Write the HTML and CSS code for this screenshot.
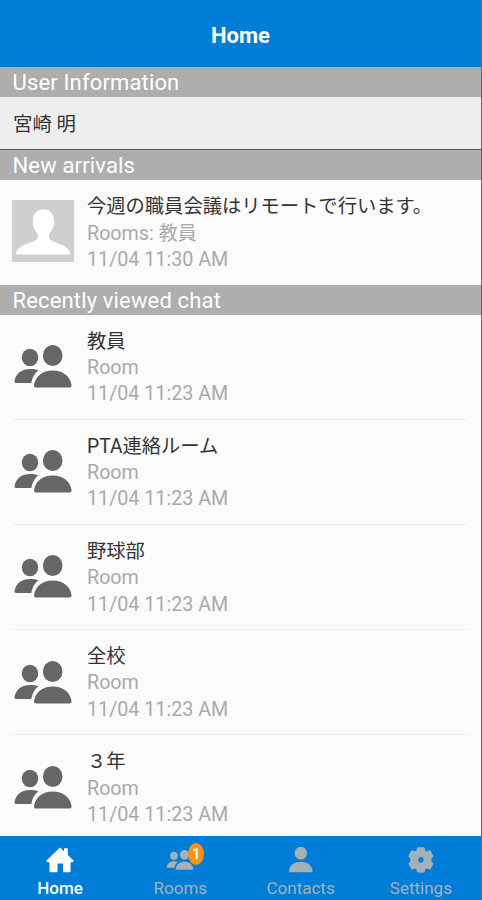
FILE: index.html
```
<!DOCTYPE html>
<html lang="ja">
<head>
    <meta charset="UTF-8">
    <meta name="viewport" content="width=device-width, initial-scale=1.0">
    <title>Home</title>
    <link rel="stylesheet" href="styles.css">
</head>
<body>
    <svg class="sprite" width="0" height="0">
        <symbol id="people" viewBox="0 0 58 43">
            <ellipse cx="16" cy="12.5" rx="8.2" ry="8.8"/>
            <ellipse cx="38.7" cy="10.5" rx="9.8" ry="10.5"/>
            <path d="M2 38C0.8 38 0.3 37.3 0.5 36C2 28 8 24 16 24C19 24 22 24.4 24.5 25.2C20.5 28.5 18.5 32 17.3 38Z"/>
            <path d="M22 42.5C20.5 42.5 19.8 41.5 20 40C21.5 31 28.5 25.5 38.7 25.5C49 25.5 56 31 57.5 40C57.7 41.5 57 42.5 55.5 42.5Z"/>
        </symbol>
    </svg>

    <div class="screen">
        <header class="header">Home</header>

        <h2 class="section-title">User Information</h2>
        <div class="user">宮崎 明</div>

        <h2 class="section-title arrivals-title">New arrivals</h2>
        <div class="item arrival">
            <svg class="avatar" viewBox="0 0 61 61">
                <rect width="61" height="61" fill="#cfcfcf"/>
                <path fill="#fff" d="M31 9C37.5 9 41.5 14 41.3 21C41.1 27 39 30.5 36.5 33.5C36 37.5 37 39 40 40.5C47 43.5 56 45 57.5 53.5H3.5C5 45 14 43.5 21.5 40.5C25 39 26 37.5 25.5 33.5C22.5 30.5 20.6 27 20.5 21C20.4 14 24.5 9 31 9Z"/>
            </svg>
            <div class="text">
                <p class="name">今週の職員会議はリモートで行います。</p>
                <p>Rooms: <span class="room-name">教員</span></p>
                <p>11/04 11:30 AM</p>
            </div>
        </div>

        <h2 class="section-title">Recently viewed chat</h2>
        <div class="list">
            <div class="item">
                <svg class="room-icon"><use href="#people"/></svg>
                <div class="text">
                    <p class="name">教員</p>
                    <p>Room</p>
                    <p>11/04 11:23 AM</p>
                </div>
            </div>
            <div class="item">
                <svg class="room-icon"><use href="#people"/></svg>
                <div class="text">
                    <p class="name">PTA連絡ルーム</p>
                    <p>Room</p>
                    <p>11/04 11:23 AM</p>
                </div>
            </div>
            <div class="item">
                <svg class="room-icon"><use href="#people"/></svg>
                <div class="text">
                    <p class="name">野球部</p>
                    <p>Room</p>
                    <p>11/04 11:23 AM</p>
                </div>
            </div>
            <div class="item">
                <svg class="room-icon"><use href="#people"/></svg>
                <div class="text">
                    <p class="name">全校</p>
                    <p>Room</p>
                    <p>11/04 11:23 AM</p>
                </div>
            </div>
            <div class="item">
                <svg class="room-icon"><use href="#people"/></svg>
                <div class="text">
                    <p class="name">３年</p>
                    <p>Room</p>
                    <p>11/04 11:23 AM</p>
                </div>
            </div>
        </div>

        <nav class="tabs">
            <a class="tab active">
                <svg class="tab-icon" viewBox="0 0 28 26">
                    <path d="M14 0.5L18 4.3V1.2H21.8V8L27.8 13.8L26.5 15.3H24.5V25.2H17V16.5H11.5V25.2H3.5V15.3H1.5L0.2 13.8Z"/>
                </svg>
                <span>Home</span>
            </a>
            <a class="tab">
                <span class="icon-wrap">
                    <svg class="tab-icon rooms-icon"><use href="#people"/></svg>
                    <span class="badge">1</span>
                </span>
                <span>Rooms</span>
            </a>
            <a class="tab">
                <svg class="tab-icon" viewBox="0 0 28 26">
                    <ellipse cx="13.8" cy="6.2" rx="6.3" ry="6.4"/>
                    <path d="M2.2 25.3V22.5C3.5 17.5 8 14.8 13.8 14.8S24 17.5 25.4 22.5V25.3Z"/>
                </svg>
                <span>Contacts</span>
            </a>
            <a class="tab">
                <svg class="tab-icon" viewBox="0 0 28 26">
                    <path fill-rule="evenodd" stroke="#a5b1b9" stroke-linejoin="round" d="M10.6 0.7H17.2L18 3.9L19.8 4.9L23.1 3.7L26 9.2L23.9 11.8V14L26 16.6L23.1 22.1L19.8 20.9L18 21.9L17.2 25.1H10.6L9.8 21.9L8 20.9L4.7 22.1L1.8 16.6L3.9 14V11.8L1.8 9.2L4.7 3.7L8 4.9L9.8 3.9ZM13.9 9.6A3.3 3.3 0 1 0 13.9 16.2A3.3 3.3 0 1 0 13.9 9.6Z"/>
                </svg>
                <span>Settings</span>
            </a>
        </nav>
    </div>
</body>
</html>
```

FILE: styles.css
```
* {
    box-sizing: border-box;
}
body {
    margin: 0;
    font-family: Roboto, "Noto Sans CJK JP", sans-serif;
    background-color: #fbfbfb;
}
.sprite {
    position: absolute;
}
.screen {
    display: flex;
    flex-direction: column;
    height: 900px;
    overflow: hidden;
    border-right: 1px solid #666;
}
.header {
    flex: none;
    height: 67px;
    padding-top: 4px;
    line-height: 64px;
    text-align: center;
    color: #fff;
    background-color: #007dd7;
    font-size: 22px;
    font-weight: bold;
}
.section-title {
    flex: none;
    height: 30px;
    margin: 0;
    padding: 1px 12.5px 0;
    line-height: 30px;
    color: #fff;
    background-color: #aeaeae;
    font-size: 22px;
    font-weight: normal;
    letter-spacing: 0.15px;
}
.user {
    flex: none;
    height: 52px;
    padding: 1px 0 0 13px;
    line-height: 53px;
    background-color: #eee;
    color: #333;
    font-size: 19.4px;
}
.arrivals-title {
    height: 31px;
    border-top: 1px solid #555;
}
.item {
    display: flex;
    flex: none;
    align-items: center;
    height: 105.25px;
    margin: 0 13px 0 12px;
    border-bottom: 1px solid #f0f0f0;
}
.list .item:first-child {
    height: 104.5px;
}
.arrival {
    height: 105px;
    border-bottom: none;
}
.avatar {
    width: 62px;
    height: 62px;
    margin: 0 13px 4px 0;
}
.room-icon {
    width: 58px;
    height: 43px;
    margin: 0 15px 0 2px;
    fill: #666;
}
.text {
    padding-top: 3px;
}
.text p {
    margin: 0;
    height: 26.4px;
    line-height: 26.4px;
    color: #aaa;
    font-size: 19.7px;
    white-space: nowrap;
}
.text .name {
    color: #333;
    font-size: 19.3px;
}
.room-name {
    font-size: 19px;
}
.list {
    flex: 1;
    min-height: 0;
    overflow: hidden;
}
.tabs {
    display: flex;
    flex: none;
    height: 64px;
    background-color: #007dd7;
}
.tab {
    display: flex;
    flex: 1;
    flex-direction: column;
    align-items: center;
    padding-top: 11px;
    color: #a5b1b9;
    fill: #a5b1b9;
    font-size: 17px;
    line-height: 20px;
}
.tab.active {
    color: #fff;
    fill: #fff;
    font-weight: 500;
}
.tab-icon {
    display: block;
    width: 28px;
    height: 26px;
    margin-bottom: 5px;
}
.icon-wrap {
    position: relative;
}
.rooms-icon {
    height: 20px;
    margin: 3px 0 8px;
}
.badge {
    position: absolute;
    top: -4px;
    left: 22px;
    width: 16px;
    height: 22px;
    border-radius: 50%;
    background-color: #fa9214;
    color: #fff;
    font-size: 15px;
    font-weight: 500;
    line-height: 22px;
    text-align: center;
}
```
